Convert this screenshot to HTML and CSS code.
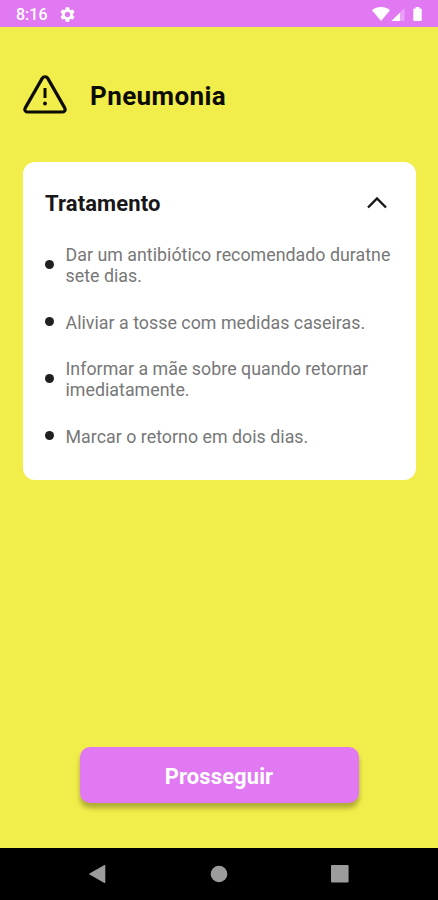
FILE: index.html
```html
<!DOCTYPE html>
<html lang="pt-BR">
<head>
  <meta charset="UTF-8">
  <meta name="viewport" content="width=device-width, initial-scale=1.0">
  <title>Pneumonia</title>
  <link rel="stylesheet" href="styles.css">
</head>
<body>
  <!-- Barra de status -->
  <div class="status-bar">
    <span class="time">8:16</span>
    <svg class="gear" width="15" height="15" viewBox="2 2 20 20">
      <path fill="currentColor" fill-rule="evenodd" d="M19.14 12.94c.04-.3.06-.61.06-.94s-.02-.64-.07-.94l2.03-1.58c.18-.14.23-.41.12-.61l-1.92-3.32c-.12-.22-.37-.29-.59-.22l-2.39.96c-.5-.38-1.03-.7-1.62-.94l-.36-2.54c-.04-.24-.24-.41-.48-.41h-3.84c-.24 0-.43.17-.47.41l-.36 2.54c-.59.24-1.13.57-1.62.94l-2.39-.96c-.22-.08-.47 0-.59.22L2.74 8.87c-.12.21-.08.47.12.61l2.03 1.58c-.05.3-.09.63-.09.94s.02.64.07.94l-2.03 1.58c-.18.14-.23.41-.12.61l1.92 3.32c.12.22.37.29.59.22l2.39-.96c.5.38 1.03.7 1.62.94l.36 2.54c.05.24.24.41.48.41h3.84c.24 0 .44-.17.47-.41l.36-2.54c.59-.24 1.13-.56 1.62-.94l2.39.96c.22.08.47 0 .59-.22l1.92-3.32c.12-.22.07-.47-.12-.61zM12 15.6a3.6 3.6 0 1 1 0-7.2 3.6 3.6 0 0 1 0 7.2z"/>
    </svg>
    <div class="status-icons">
      <svg width="18" height="14" viewBox="0 0 18 14">
        <path fill="currentColor" d="M9 14 0 3.200C2.500 1.100 5.600 0 9 0s6.500 1.100 9 3.200z"/>
      </svg>
      <svg class="signal" width="14" height="13" viewBox="0 0 14 14">
        <path fill="currentColor" opacity=".3" d="M14 0v14H0z"/>
        <path fill="currentColor" d="M9 5v9H0z"/>
      </svg>
      <svg class="battery" width="9" height="14" viewBox="0 0 9 15">
        <path fill="currentColor" d="M2.500 0h4v1.500H8a1 1 0 0 1 1 1V14a1 1 0 0 1-1 1H1a1 1 0 0 1-1-1V2.500a1 1 0 0 1 1-1h1.500z"/>
      </svg>
    </div>
  </div>

  <!-- Conteúdo principal -->
  <main>
    <div class="title">
      <svg width="44" height="40" viewBox="0 0 44 40" fill="none" stroke="currentColor" stroke-linecap="round" stroke-linejoin="round">
        <path stroke-width="3.200" d="M19.200 3.400 2.300 32.900C1.100 35.200 2.500 37 5 37h34c2.500 0 3.900-1.800 2.700-4.100L24.800 3.400c-1.300-2.200-4.300-2.200-5.600 0z"/>
        <path stroke-width="3" stroke-linecap="butt" d="M22 13v10"/>
        <circle cx="22" cy="28.500" r="1.900" fill="currentColor" stroke="none"/>
      </svg>
      <h1>Pneumonia</h1>
    </div>

    <section class="card">
      <div class="card-header">
        <h2>Tratamento</h2>
        <svg width="20" height="12" viewBox="0 0 20 12" fill="none" stroke="currentColor" stroke-width="2.400">
          <path d="m1 10.500 9-9 9 9"/>
        </svg>
      </div>
      <ul>
        <li>Dar um antibiótico recomendado duratne sete dias.</li>
        <li>Aliviar a tosse com medidas caseiras.</li>
        <li>Informar a mãe sobre quando retornar imediatamente.</li>
        <li>Marcar o retorno em dois dias.</li>
      </ul>
    </section>

    <button class="next" type="button">Prosseguir</button>
  </main>

  <!-- Barra de navegação -->
  <div class="nav-bar">
    <svg width="18" height="18" viewBox="0 0 18 18">
      <path fill="currentColor" d="M16.300.4v17.200a.6.600 0 0 1-.9.400L.5 9.500a.6.600 0 0 1 0-1L15.400 0a.6.600 0 0 1 .9.400z"/>
    </svg>
    <svg width="18" height="18" viewBox="0 0 18 18">
      <circle cx="9" cy="9" r="8.300" fill="currentColor"/>
    </svg>
    <svg width="18" height="18" viewBox="0 0 18 18">
      <rect width="17.600" height="17.600" rx="1" fill="currentColor"/>
    </svg>
  </div>
</body>
</html>
```
FILE: styles.css
```css
* {
  box-sizing: border-box;
}

body {
  margin: 0;
  height: 900px;
  display: flex;
  flex-direction: column;
  background-color: #f1ed4a;
  font-family: Roboto, sans-serif;
}

svg {
  display: block;
  flex: none;
}

/* Barra de status */
.status-bar {
  height: 27px;
  padding: 1px 16px 0;
  display: flex;
  align-items: center;
  background-color: #e179f3;
  color: white;
}

.time {
  width: 44px;
  font-size: 16px;
  font-weight: 500;
}

.status-icons {
  margin-left: auto;
  display: flex;
  align-items: center;
}

.signal {
  margin-left: 1px;
}

.battery {
  margin-left: 8px;
}

/* Conteúdo principal */
main {
  flex: 1;
  padding: 48px 22px 45px;
  display: flex;
  flex-direction: column;
}

.title {
  height: 40px;
  margin-bottom: 47px;
  padding-left: 1px;
  display: flex;
  align-items: center;
  gap: 23px;
  color: #0c0c05;
}

h1, h2 {
  margin: 0;
  font-weight: 700;
}

h1 {
  padding-top: 2px;
  font-size: 26px;
  letter-spacing: 0.4px;
}

/* Cartão de tratamento */
.card {
  height: 318px;
  margin-left: 0.5px;
  padding: 28px 22px 0 22.5px;
  border-radius: 12px;
  background-color: white;
}

.card-header {
  display: flex;
  align-items: center;
  justify-content: space-between;
  height: 26px;
  padding-right: 7px;
  color: #17171a;
}

h2 {
  font-size: 22px;
  letter-spacing: 0.1px;
}

ul {
  list-style: none;
  margin: 28px 0 0;
  padding: 0;
  display: flex;
  flex-direction: column;
  gap: 25.500px;
}

li {
  display: flex;
  align-items: center;
  gap: 11.5px;
  font-size: 17.800px;
  letter-spacing: 0.03px;
  line-height: 21px;
  color: #777;
}

li::before {
  content: "";
  flex: none;
  width: 9px;
  height: 9px;
  margin-bottom: 2px;
  border-radius: 50%;
  background-color: #202022;
}

/* Botão */
.next {
  width: 279px;
  height: 56px;
  margin: auto auto 0;
  padding-top: 3px;
  border: none;
  border-radius: 10px;
  background-color: #e179f3;
  box-shadow: 0 5px 5px rgba(0, 0, 0, 0.28);
  color: white;
  font-family: inherit;
  font-size: 22px;
  font-weight: 700;
  letter-spacing: 0.1px;
}

/* Barra de navegação */
.nav-bar {
  height: 52px;
  padding: 0 89px;
  display: flex;
  align-items: center;
  justify-content: space-between;
  background-color: black;
  color: #9c9c9c;
}
```
